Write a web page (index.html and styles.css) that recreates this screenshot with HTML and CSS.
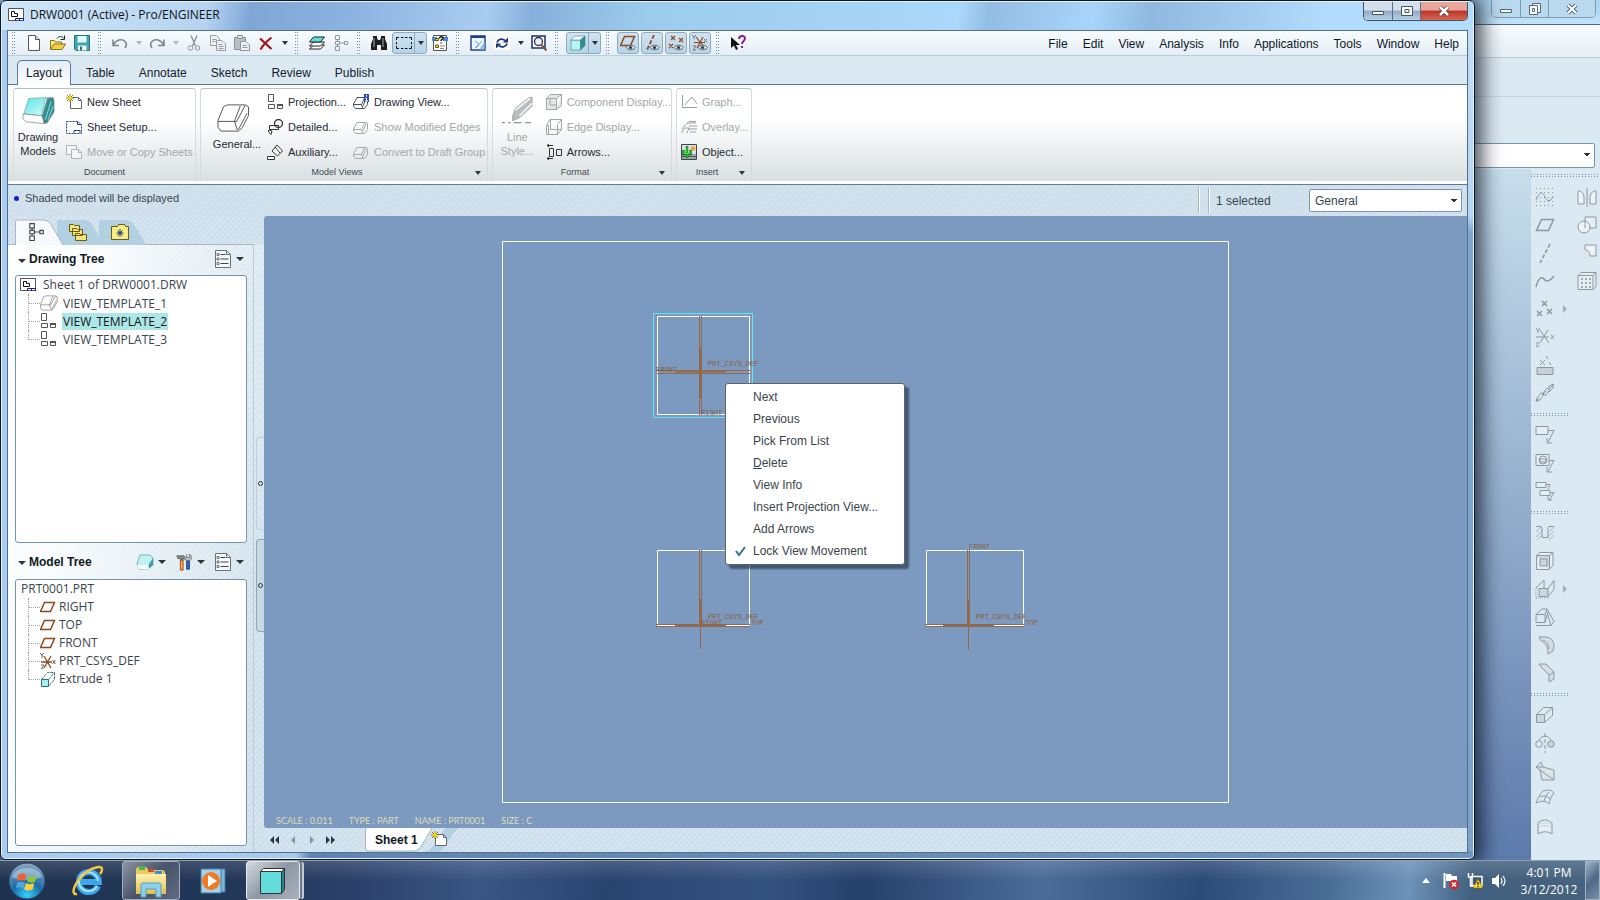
FILE: index.html
```html
<!DOCTYPE html>
<html lang="en">
<head>
<meta charset="utf-8">
<title>DRW0001 (Active) - Pro/ENGINEER</title>
<link rel="stylesheet" href="styles.css">
</head>
<body>
<svg class="defs" aria-hidden="true">
<defs>
<linearGradient id="gAqua" x1="0" y1="0" x2="1" y2="1"><stop offset="0" stop-color="#5fe3e3"/><stop offset="1" stop-color="#d8ffff"/></linearGradient>
<linearGradient id="gFold" x1="0" y1="0" x2="0" y2="1"><stop offset="0" stop-color="#fff3ad"/><stop offset="1" stop-color="#e3bd52"/></linearGradient>
<radialGradient id="gOrb" cx=".5" cy=".9" r=".9"><stop offset="0" stop-color="#35d0ff"/><stop offset=".45" stop-color="#1c6ca8"/><stop offset="1" stop-color="#8fa9c0"/></radialGradient>
<symbol id="drw" viewBox="0 0 16 16"><path d="M.5 1.500h15v12H.5z" fill="#fff" stroke="#555"/><path d="M3.500 4.500h3v2h3v3h-6z" fill="none" stroke="#111"/><path d="M7.500 14v-2.500h8V14M11.500 11.500V14" fill="none" stroke="#1a1a9a"/></symbol>
<symbol id="new" viewBox="0 0 16 16"><path d="M2.500.5h7l4 4v11h-11z" fill="#fff" stroke="#555"/><path d="M9.500.5v4h4" fill="#ddd" stroke="#555"/></symbol>
<symbol id="open" viewBox="0 0 16 16"><path d="M.5 14V5.500h4l1 1.500h6v2" fill="#fbe98a" stroke="#8a7414"/><path d="M.5 14.500 4 9h11.500L12 14.500z" fill="#f2cf45" stroke="#8a7414"/><path d="M7 3.500C9 .8 12 1 14 3.500M14.500.5v4h-4" fill="none" stroke="#222"/></symbol>
<symbol id="save" viewBox="0 0 16 16"><path d="M.5.5h15v15H2L.5 14z" fill="#3fa8b0" stroke="#2b6f79"/><path d="M3.500 1h9v6.500h-9z" fill="#dffcff"/><path d="M4 10.500h8.500v5H4z" fill="#eef6f7"/><path d="M6 11.500h2v4H6z" fill="#2b6f79"/></symbol>
<symbol id="undo" viewBox="0 0 16 16"><path d="M1 4.500v6h6M1.500 10C4 4.500 10 3.500 13 6.500c2 2 1.500 4.500 0 6.500" fill="none" stroke="#7b8791" stroke-width="1.600"/></symbol>
<symbol id="redo" viewBox="0 0 16 16"><path d="M15 4.500v6H9M14.500 10C12 4.500 6 3.500 3 6.500c-2 2-1.500 4.500 0 6.500" fill="none" stroke="#7b8791" stroke-width="1.600"/></symbol>
<symbol id="cut" viewBox="0 0 16 16" fill="none" stroke="#8d969d"><path d="M5 .5 9.500 11M11 .5 6.500 11" stroke-width="1.400"/><circle cx="4.500" cy="13" r="2.200"/><circle cx="11.500" cy="13" r="2.200"/></symbol>
<symbol id="copy" viewBox="0 0 16 16" fill="#eef1f3" stroke="#969ea4"><path d="M.5.5h6l3 3v7h-9z"/><path d="M2.500 4.500h4M2.500 6.500h3"/><path d="M6.500 5.500h5.500l3.500 3.500v6.500h-9z"/><path d="M8.500 9.500h4M8.500 11.500h5M8.500 13.500h5"/></symbol>
<symbol id="paste" viewBox="0 0 16 16" stroke="#8d969d"><path d="M.5 2.500h11v12H.5z" fill="#b9bfc4"/><path d="M3.500.5h5v3h-5z" fill="#dde1e4"/><path d="M6.500 6.500h5.500l3.500 3.500v5.500h-9z" fill="#eef1f3"/><path d="M8.500 10.500h4M8.500 12.500h5"/></symbol>
<symbol id="del" viewBox="0 0 16 16"><path d="M2 3.500 13.500 14M13.500 2.500C9 6 5 10 2.500 14.500" fill="none" stroke="#a3121b" stroke-width="2.200"/></symbol>
<symbol id="layers" viewBox="0 0 16 16" stroke="#222"><path d="m.5 14 4-4h11l-4 4z" fill="#fff"/><path d="m.5 11 4-4h11l-4 4z" fill="#fff"/><path d="m.5 7 4-5h11l-4 5z" fill="#5fe0e0"/></symbol>
<symbol id="tree" viewBox="0 0 16 16" fill="none" stroke="currentColor"><path d="M2.500.5h4v4h-4zM2.500 6.500h4v3h-4zM2.500 11.500h4v4h-4zM11.500 6.500h3v3h-3zM4.500 4.500v2M4.500 9.500v2M6.500 8h5"/></symbol>
<symbol id="bino" viewBox="0 0 16 16"><path d="M2 1h4v2l1 2h2l1-2V1h4v3l2 5v6h-6V10H6v5H0V9l2-5z" fill="#1c1c1c"/><path d="M3 3v9M12 3v9" stroke="#aaa"/></symbol>
<symbol id="marq" viewBox="0 0 16 16"><path d="M.5 5V2.500H3M5 2.500h2.500M9 2.500h2.500M13 2.500h2.500V5M15.500 7v2.500M15.500 11v2.500H13M11.500 13.500H9M7.500 13.500H5M3 13.500H.5V11M.5 9.500V7" fill="none" stroke="#111"/></symbol>
<symbol id="find" viewBox="0 0 16 16"><path d="M1.500.5h13v15h-13z" fill="#fff" stroke="#555"/><path d="M0 2h5v4H0zM11 2h5v4h-5z" fill="#4b87d8"/><path d="M3.500 3.500h3v2h-3zM3.500 10h3v2.500h-3z" fill="#f5e048" stroke="#6b5b00"/><path d="M7.500 3.500c0-2.500 4-2.500 3.500 0-.5 1-2 1-2 2.500M9 7.500v1" fill="none" stroke="#111" stroke-width="1.500"/><path d="M8 11h5M8 13.500h4" stroke="#888"/></symbol>
<symbol id="sketch" viewBox="0 0 16 16"><path d="M1 1h14v14H1z" fill="#eaf5ff" stroke="#1d3f80" stroke-width="1.400"/><path d="M1 2h14" stroke="#1d3f80" stroke-width="2"/><path d="m5 6 4 3-4 4M12 6l-6 7" fill="none" stroke="#6ba6dc"/><path d="M9 14.500h5.500V7z" fill="#8ec0ef"/></symbol>
<symbol id="refresh" viewBox="0 0 16 16"><path d="M0 1h16v14H0z" fill="#fbfbef"/><path d="M3 7.500C4 4 8 3 11 5.500M13 8.500C12 12 8 13 5 10.500" fill="none" stroke="#16357f" stroke-width="1.700"/><path d="M9 7.500h5v-5zM7 8.500H2v5z" fill="#16357f"/></symbol>
<symbol id="zoom" viewBox="0 0 16 16"><path d="M1 1h13v12H1z" fill="#fff" stroke="#1d2f70" stroke-width="1.500"/><circle cx="7.500" cy="6.500" r="4" fill="#eef" stroke="#333" stroke-width="1.300"/><path d="m10.500 10 5 5.500" stroke="#8b4a32" stroke-width="2"/></symbol>
<symbol id="cube" viewBox="0 0 16 16" stroke="#3d8585" stroke-width=".6"><path d="M1 5h9.500v10H1z" fill="#b5f5f5"/><path d="m1 5 4-4h10l-4.500 4z" fill="#f2ffff"/><path d="M10.500 5 15 1v9.500L10.500 15z" fill="#2f8f8f"/></symbol>
<symbol id="eye" viewBox="0 0 16 16"><path d="M6 12.500c2-3 7-3 9.500 0-2.500 3-7.500 3-9.500 0z" fill="#dfe5e8" stroke="#59636a"/><circle cx="10.500" cy="12.500" r="1.600" fill="#303a40"/></symbol>
<symbol id="plane" viewBox="0 0 16 16"><path d="M4.500 3.500h10l-4 9h-10z" fill="none" stroke="#8c4a1c" stroke-width="1.500"/></symbol>
<symbol id="pvis" viewBox="0 0 16 16"><use href="#plane" y="-2"/><use href="#eye"/></symbol>
<symbol id="avis" viewBox="0 0 16 16"><path d="M10 0 3 15" stroke="#8c4a1c" stroke-width="1.800" stroke-dasharray="4 2"/><use href="#eye"/></symbol>
<symbol id="ptvis" viewBox="0 0 16 16"><path d="m3 1 4 4m0-4L3 5m8-2 4 4m0-4-4 4M1 9l4 4m0-4-4 4" stroke="#8c4a1c" stroke-width="1.300"/><use href="#eye"/></symbol>
<symbol id="cvis" viewBox="0 0 16 16"><path d="M2 7.500h11M4 2l8 10M11 2 5 13" stroke="#8c4a1c" stroke-width="1.200"/><path d="m0 0 2 2 2-2M2 2v2M12 4l3 3m0-3-3 3M1 11h3l-3 4h3" fill="none" stroke="#777"/><use href="#eye"/></symbol>
<symbol id="help" viewBox="0 0 16 16"><path d="M1 2v11l3-2.500L6 15l2-1-2-4h4z" fill="#111"/><path d="M9 4c0-4 6-4 6-.5C15 6 12 6 12 9M12 11v2" fill="none" stroke="#8a1fa0" stroke-width="2"/></symbol>
<symbol id="boxA" viewBox="0 0 34 30"><path d="m7 2 23-1-6 2-4 17-18-2z" fill="url(#gAqua)" stroke="#5aa5a5" stroke-width=".7"/><path d="m1 18 20 2 2 8L4 26l-3-3z" fill="#fff" stroke="#777" stroke-width=".7"/><path d="m21 20 5-17 6-2 1 4v11l-7 11-3 1z" fill="#2f8f92" stroke="#777" stroke-width=".7"/><path d="m24 24 6-19M27 24l5-14" stroke="#8cdcdc"/></symbol>
<symbol id="box" viewBox="0 0 34 30" fill="none" stroke="currentColor"><path d="M11 1.500h18l3.500 2v9L26 25l-4 3.500H4l-3-4v-7L7 3zM1 18.500h17l6-16M18 18.500l3 9M18 18.500l2 .5 9-17M22 27l9-17"/></symbol>
<symbol id="sheetnew" viewBox="0 0 16 16"><path d="M4.500 3.500h8l3 3v8h-11z" fill="#fff" stroke="#667"/><path d="M12.500 3.500v3h3" fill="none" stroke="#667"/><path d="M4 0v8M0 4h8M1 1l6 6M7 1 1 7" stroke="#6d5c00" stroke-width=".8"/><path d="M4 1.500v5M1.500 4h5" stroke="#ffe600" stroke-width="1.500"/></symbol>
<symbol id="setup" viewBox="0 0 16 16"><path d="M.5 2.500h11l4 3v9H.5z" fill="#fff" stroke="#23407c" stroke-dasharray="2 1"/><path d="M11.500 2.500v3h4M8 14v-2.500h6V14" fill="none" stroke="#23407c"/></symbol>
<symbol id="move" viewBox="0 0 16 16" fill="#f5f6f6" stroke="#b0b5b8"><path d="M.5 1.500h10v9H.5z"/><path d="M5.500 5.500h7l3 3v6h-10zM12.500 5.500v3h3"/></symbol>
<symbol id="proj" viewBox="0 0 16 16" fill="#fff" stroke="#555"><path d="M1.500.5h5v7h-5zM1.500 10.500h6v4h-6zM10.500 10.500h5v4h-5z"/><path d="M10 11h6" stroke-width="2"/></symbol>
<symbol id="detail" viewBox="0 0 16 16" fill="none" stroke="#333"><circle cx="11.500" cy="4.500" r="4" stroke-width="1.300"/><path d="M11 6.500H2.500v4h9V6M1 12l3 3.500 1-3.500-3-1z"/></symbol>
<symbol id="aux" viewBox="0 0 16 16" fill="#fff" stroke="#333"><path d="m5 7 5-6 5.500 6-5 5zM8 3l5 6"/><path d="M.5 12.500h7v3h-7z"/></symbol>
<symbol id="dv" viewBox="0 0 16 16" fill="none" stroke="currentColor"><path d="M4 3.500h9l1.500 1v6l-3 4h-9L.5 12v-2zM.5 10.500h8l3-6.500M8.500 10.500l1.500 4M10 12l3-7"/></symbol>
<symbol id="dvi" viewBox="0 0 16 16"><use href="#dv"/><path d="M11 0h5v8h-5z" fill="#2450b0"/><path d="M13.500 1v1.500M12.500 4h1v3M12 7h3" stroke="#fff" fill="none"/></symbol>
<symbol id="pencil" viewBox="0 0 34 30"><path d="m12 20 3-8L29 1h3v9L19 22l-7 3z" fill="#b9bdbf" stroke="#8d9295" stroke-width=".7"/><path d="m15 14 15-12M19 20 32 7" stroke="#eee" stroke-width="2"/><path d="M1 27h3m3 0h3m3 0h8m4 0h6" stroke="#8d9295" stroke-width="1.300"/></symbol>
<symbol id="comp" viewBox="0 0 16 16" stroke="#a0a5a8"><path d="M.5 4.500h10v11H.5zM.5 4.500l4-4h11l-5 4M15.500.5v11l-5 4" fill="#e4e7e8"/><path d="M4 4v7h7" fill="none"/></symbol>
<symbol id="edge" viewBox="0 0 16 16" stroke="#a0a5a8" fill="none"><path d="M.5 6.500 4 .5h11.500v10l-4 5H.5zM.5 6.500h2v9M4.500 .5v10h11M11.500 15.500v-10l4-5"/></symbol>
<symbol id="arrows" viewBox="0 0 16 16" stroke="#333" fill="none"><path d="M3.500 4.500h4v8h-4zM10.500 5.500h5v6h-5zM1 1.500h6M1 14.500h6M3 0 1 1.500 3 3M3 13l-2 1.500L3 16"/></symbol>
<symbol id="graph" viewBox="0 0 16 16" stroke="#9a9fa3" fill="none"><path d="M1.500 1v12.500H16M4 11l4-5 3-3 5 7"/></symbol>
<symbol id="over" viewBox="0 0 16 16" stroke="#9a9fa3" fill="none"><path d="m.5 14 3-5h5l-3 5M4 6.500l4-4h7M6 4h9M8 7h8M7 10h9M9 13h6M1 10l3-4"/></symbol>
<symbol id="obj" viewBox="0 0 16 16"><path d="M.5.5h15v15H.5z" fill="#d5e2ee" stroke="#444"/><path d="M1 10h14v5H1z" fill="#9aa"/><path d="M1 12.500h14" stroke="#555"/><circle cx="12" cy="4.500" r="2.300" fill="#f6a32b"/><path d="M6 2v12M2.500 6v4h7V6" stroke="#11771a" stroke-width="2.400" fill="none"/><path d="M6 3v10M3 7v2.500h6V7" stroke="#43e04b" fill="none"/></symbol>
<symbol id="folders" viewBox="0 0 18 18" fill="#f6e67a" stroke="#6b5b17"><path d="M.5 1.500h4l1 1h5v6H.5zM3.500 5.500h4l1 1h5v6h-10zM6.500 10.500h4l1 1h6v6h-11z"/></symbol>
<symbol id="fav" viewBox="0 0 18 16"><path d="M.5 2.500h6l1-2h6l1 2h3v13H.5z" fill="#f8ec83" stroke="#6b5b17"/><path d="M9 5v8M5.500 9h7M6.500 6.500l5 5M11.500 6.500l-5 5" stroke="#16357f"/></symbol>
<symbol id="list" viewBox="0 0 16 18"><path d="M.5.500h11l4 4v13H.5z" fill="#f5f9fc" stroke="#63737f"/><path d="M11.500.5v4h4" fill="none" stroke="#63737f"/><path d="M5.500 4.500h5M5.500 9h8M5.500 13.500h8" stroke="#444"/><path d="M2 3.500h2v2H2zM2 8h2v2H2zM2 12.500h2v2H2z" fill="none" stroke="#555" stroke-width=".8"/></symbol>
<symbol id="shade" viewBox="0 0 18 16"><path d="M4 1h10l3 3v7l-5 4H3l-2-5z" fill="#bff3f3" stroke="#5c9a9c" stroke-width=".7"/><path d="m13 10 4-6v7l-5 4z" fill="#3f9fa2"/><path d="M1 11h11l1 4H3z" fill="#fff"/></symbol>
<symbol id="tools" viewBox="0 0 18 20"><path d="M1 3h8l3 3v3l-3-3H8v2H5V6H2z" fill="#7f8b93" stroke="#444" stroke-width=".7"/><path d="M5 8h3v11H5z" fill="#f6b83c" stroke="#a33a10"/><path d="M12 1v4h3V1l2 2v4l-2 2h-3l-2-3" fill="#b9c1c6" stroke="#555" stroke-width=".7"/><path d="M12 9h3v9h-3z" fill="#2f6fd0" stroke="#173a78"/></symbol>
<symbol id="csys" viewBox="0 0 16 16"><path d="M1 9h11M4 3l7 12M11 3 4 15" stroke="#8c4a1c" stroke-width="1.300"/><path d="m0 0 2 2 2-2M2 2v3M12.500 7l3 4m0-4-3 4M1 12h3l-3 4h3" fill="none" stroke="#666"/></symbol>
<symbol id="ext" viewBox="0 0 16 16"><path d="M1.500 8.500h7v7h-7z" fill="#9ff0f0" stroke="#3b6f70"/><path d="m1.500 8.500 6-7h7M14.500 1.500v7l-6 7M8.500 8.500l6-7" fill="none" stroke="#3b6f70" stroke-dasharray="3 1"/></symbol>
<symbol id="s1" viewBox="0 0 20 20"><path d="M1 1.500h18M1 5.500h18M1 10.500h18M1 14.500h18M1 18.500h18" stroke-dasharray="1 3"/><path d="M1 13c4-10 7-8 9-3s6 5 8-1"/></symbol>
<symbol id="s2" viewBox="0 0 20 20"><path d="M6.500 4.500h12l-5 11H1.500z" stroke-width="1.500"/></symbol>
<symbol id="s3" viewBox="0 0 20 20"><path d="M15 1 5 20" stroke-width="1.600" stroke-dasharray="4 2"/></symbol>
<symbol id="s4" viewBox="0 0 20 20"><path d="M1 16C3 7 7 5 9 8s5 3 10-3" stroke-width="1.500"/></symbol>
<symbol id="s5" viewBox="0 0 20 20"><path d="m7 2 5 5m0-5L7 7m-5 5 5 5m0-5-5 5m10-7 5 5m0-5-5 5" stroke-width="1.500"/></symbol>
<symbol id="s6" viewBox="0 0 20 20"><path d="M1 10h13M5 3l9 13M13 3 5 16m11-8 3 4m0-4-3 4M1 1l2 3 2-3M3 4v2M1 16h3l-3 4h4"/></symbol>
<symbol id="s7" viewBox="0 0 20 20"><path d="M2 12.500h16v7H2z" fill="#c6d0d6"/><path d="m5 5 5 5m0-5-5 5M11 1l2 3m1 3 2 3"/></symbol>
<symbol id="s8" viewBox="0 0 20 20"><path d="m2 15 4-5 3 1-4 6-4 1zM8 10l4-5 3 1-4 6-3 0zM13 4l5-3v4l-4 4M1 19l3-4M7 12l4-4M14 6l5-5"/></symbol>
<symbol id="s9" viewBox="0 0 20 20"><path d="M1 1.500h12v8H1z" fill="#e6eef4"/><path d="M13 5.500h6l-6 12M12 13v5h5"/></symbol>
<symbol id="s10" viewBox="0 0 20 20"><path d="M1 1.500h13v11H1z" fill="#e6eef4"/><circle cx="8" cy="7" r="4"/><path d="M5 9h6V6H5z"/><path d="M14 7.500h5l-6 11M12 14v5h5"/></symbol>
<symbol id="s11" viewBox="0 0 20 20"><path d="M1 1.500h10v5H1zM5 9.500h10v5H5z" fill="#e6eef4"/><path d="M11 3.500h4l-2 5M15 11.500h4l-5 8M13 15v4h4"/></symbol>
<symbol id="s12" viewBox="0 0 20 20"><path d="M1 3.500h5l1 2v9h6v-9l1-2h5"/><path d="M1 9l5-5M1 14l6-6M2 17l5-5M14 9l5-5M13 14l6-6M14 17l5-5" stroke-width=".6"/></symbol>
<symbol id="s13" viewBox="0 0 20 20"><path d="M1.500 4.500 5 1.500h13v13l-4 4H1.500z" fill="#e6eef4"/><path d="M1.500 4.500h13v14M14.500 4.500l3.500-3M5 8h7v7H5z" fill="#ccd6dc"/></symbol>
<symbol id="s14" viewBox="0 0 20 20"><path d="M4 9.500h9v8H4z" fill="#ccd6dc"/><path d="M1 9v10h13" stroke-dasharray="1 1"/><path d="m1 9 8-8v8M13 9.500l6-8v9l-6 7"/></symbol>
<symbol id="s15" viewBox="0 0 20 20"><path d="M1 7.500h9v8H1zM1 18.500h15l3-4L12 2H7L1 7.500M10 7.500 12 2M10 15.500 13 5M16 18.500 12 5"/></symbol>
<symbol id="s16" viewBox="0 0 20 20"><path d="M4 2h6c6 0 9 4 9 9l-1 5-5 3c0-8-2-11-7-13z" fill="#d5dde2"/><path d="M14 14c0-4-2-7-6-9"/></symbol>
<symbol id="s17" viewBox="0 0 20 20"><path d="M4 1h7l8 8v7l-5 3v-7L7 5z" fill="#d5dde2"/><path d="m14 12 5-3"/></symbol>
<symbol id="s18" viewBox="0 0 20 20"><path d="M1.500 9.500h8v8h-8z" fill="#ccd6dc"/><path d="m1.500 9.500 7-7h9v8l-8 7M9.500 9.500l8-7"/></symbol>
<symbol id="s19" viewBox="0 0 20 20"><circle cx="4" cy="11" r="3.300"/><circle cx="16" cy="11" r="3.300" fill="#ccd6dc"/><path d="M10 0v20" stroke-dasharray="4 2"/><path d="M4 7c3-5 9-5 12 0"/></symbol>
<symbol id="s20" viewBox="0 0 20 20"><path d="m1 6 5-5 2 5 11 3v10H7L5 9z" fill="#dbe3e8"/><path d="m5 9 14 10M1 6h7"/></symbol>
<symbol id="s21" viewBox="0 0 20 20"><path d="M1 14C4 6 7 2 9 2c5-2 7-1 10 2-2 2-4 6-5 11-4-4-8-3-13-1zM5 8c4-2 7-1 10 2M14 3c-3 3-4 6-5 9"/></symbol>
<symbol id="s22" viewBox="0 0 20 20"><path d="M3 6c4-4 10-4 14 0v11c-4-3-10-3-14 0z" fill="#e6eef4"/><path d="M3 8c4-3 10-3 14 0M3 11c4-3 10-3 14 0" stroke-dasharray="1 2"/></symbol>
<symbol id="m1" viewBox="0 0 20 20"><path d="M10 1v19"/><path d="M1 4c4 0 6 3 6 7v6H1zM19 4c-4 0-6 3-6 7v6h6z" fill="#eef3f7"/></symbol>
<symbol id="m2" viewBox="0 0 20 20"><path d="M8 2h11v11H8z" fill="#e6eef4"/><circle cx="7" cy="12" r="6" fill="#eef3f7"/><path d="M8 13V6"/></symbol>
<symbol id="m3" viewBox="0 0 20 20"><path d="M8 2h11v11h-6c0-4-2-6-5-6z" fill="#eef3f7"/><circle cx="7" cy="12" r="5" fill="#dfe4ea" stroke="none"/></symbol>
<symbol id="m4" viewBox="0 0 20 20"><path d="M1 4.500 4 1.500h15v14l-3 3H1zM1 4.500h15v14M16 4.500l3-3" fill="#e6eef4"/><path d="M4 8h10M4 12h10M4 16h10" stroke-width="1.500" stroke-dasharray="2 2"/></symbol>
</defs>
</svg>

<div class="desktop">
  <section class="back-window" aria-label="Pro/ENGINEER background window">
    <div class="back-title">
      <div class="win-buttons pale">
        <button type="button" aria-label="Minimize"><svg width="14" height="12"><path d="M1.500 6.500h11v3h-11z" fill="#fff" stroke="#55677c"/></svg></button>
        <button type="button" aria-label="Restore"><svg width="14" height="14"><path d="M4.500 1.500h8v9h-8z" fill="#fff" stroke="#55677c"/><path d="M1.500 3.500h8v9h-8zM4.500 6.500h2v3h-2z" fill="#fff" stroke="#55677c"/></svg></button>
        <button type="button" class="wide" aria-label="Close"><svg width="14" height="12"><path d="m3 2 8 8m0-8-8 8" stroke="#55677c" stroke-width="4"/><path d="m3 2 8 8m0-8-8 8" stroke="#fff" stroke-width="2"/></svg></button>
      </div>
    </div>
    <div class="back-toolbar"></div>
    <div class="back-tabs"></div>
    <div class="back-ribbon"><select class="combo back-combo" aria-label="Filter"><option></option></select></div>
    <div class="back-body">
      <div class="back-canvas"></div>
      <div class="feature-bar">
        <div class="hgrip long"></div>
        <div class="feature-cols">
          <div class="feature-col">
            <button type="button" aria-label="Sketch"><svg><use href="#s1"/></svg></button>
            <button type="button" aria-label="Plane"><svg><use href="#s2"/></svg></button>
            <button type="button" aria-label="Axis"><svg><use href="#s3"/></svg></button>
            <button type="button" aria-label="Curve"><svg><use href="#s4"/></svg></button>
            <button type="button" class="more" aria-label="Point"><svg><use href="#s5"/></svg></button>
            <button type="button" aria-label="Coordinate system"><svg><use href="#s6"/></svg></button>
            <button type="button" aria-label="Analysis"><svg><use href="#s7"/></svg></button>
            <button type="button" aria-label="Reference"><svg><use href="#s8"/></svg></button>
            <div class="hgrip"></div>
            <button type="button" aria-label="Annotation"><svg><use href="#s9"/></svg></button>
            <button type="button" aria-label="Annotation plane"><svg><use href="#s10"/></svg></button>
            <button type="button" aria-label="Propagate"><svg><use href="#s11"/></svg></button>
            <div class="hgrip"></div>
            <button type="button" aria-label="Hole"><svg><use href="#s12"/></svg></button>
            <button type="button" aria-label="Shell"><svg><use href="#s13"/></svg></button>
            <button type="button" class="more" aria-label="Rib"><svg><use href="#s14"/></svg></button>
            <button type="button" aria-label="Draft"><svg><use href="#s15"/></svg></button>
            <button type="button" aria-label="Round"><svg><use href="#s16"/></svg></button>
            <button type="button" aria-label="Chamfer"><svg><use href="#s17"/></svg></button>
            <div class="hgrip"></div>
            <button type="button" aria-label="Extrude"><svg><use href="#s18"/></svg></button>
            <button type="button" aria-label="Revolve"><svg><use href="#s19"/></svg></button>
            <button type="button" aria-label="Sweep"><svg><use href="#s20"/></svg></button>
            <button type="button" aria-label="Boundary blend"><svg><use href="#s21"/></svg></button>
            <button type="button" aria-label="Style"><svg><use href="#s22"/></svg></button>
          </div>
          <div class="feature-col second">
            <button type="button" aria-label="Mirror"><svg><use href="#m1"/></svg></button>
            <button type="button" aria-label="Merge"><svg><use href="#m2"/></svg></button>
            <button type="button" aria-label="Trim"><svg><use href="#m3"/></svg></button>
            <button type="button" aria-label="Pattern"><svg><use href="#m4"/></svg></button>
          </div>
        </div>
      </div>
    </div>
  </section>

  <main class="window">
    <header class="titlebar">
      <svg class="i16"><use href="#drw"/></svg>
      <h1>DRW0001 (Active) - Pro/ENGINEER</h1>
      <div class="win-buttons">
        <button type="button" aria-label="Minimize"><svg width="14" height="12"><path d="M1.500 6.500h11v3h-11z" fill="#fff" stroke="#455467"/></svg></button>
        <button type="button" aria-label="Maximize"><svg width="14" height="12"><path d="M1.500 1.500h11v9h-11zM5 4.500h4v3H5z" fill="#fff" stroke="#455467"/></svg></button>
        <button type="button" class="wide close" aria-label="Close"><svg width="14" height="12"><path d="m3 2 8 8m0-8-8 8" stroke="#5c3535" stroke-width="4"/><path d="m3 2 8 8m0-8-8 8" stroke="#fff" stroke-width="2.500"/></svg></button>
      </div>
    </header>
    <div class="client">
      <div class="toolbar">
        <span class="grip"></span>
        <button type="button" class="tb" aria-label="New"><svg class="i16"><use href="#new"/></svg></button>
        <button type="button" class="tb" aria-label="Open"><svg class="i16"><use href="#open"/></svg></button>
        <button type="button" class="tb" aria-label="Save"><svg class="i16"><use href="#save"/></svg></button>
        <span class="grip"></span>
        <button type="button" class="tb" aria-label="Undo"><svg class="i16"><use href="#undo"/></svg></button>
        <button type="button" class="drop dim" aria-label="Undo list"></button>
        <button type="button" class="tb" aria-label="Redo"><svg class="i16"><use href="#redo"/></svg></button>
        <button type="button" class="drop dim" aria-label="Redo list"></button>
        <button type="button" class="tb" aria-label="Cut"><svg class="i16"><use href="#cut"/></svg></button>
        <button type="button" class="tb" aria-label="Copy"><svg class="i16"><use href="#copy"/></svg></button>
        <button type="button" class="tb" aria-label="Paste"><svg class="i16"><use href="#paste"/></svg></button>
        <button type="button" class="tb" aria-label="Delete"><svg class="i16"><use href="#del"/></svg></button>
        <button type="button" class="drop" aria-label="Delete options"></button>
        <span class="grip"></span>
        <button type="button" class="tb" aria-label="Layers"><svg class="i16"><use href="#layers"/></svg></button>
        <button type="button" class="tb grey" aria-label="Tree"><svg class="i16"><use href="#tree"/></svg></button>
        <span class="grip"></span>
        <button type="button" class="tb" aria-label="Find"><svg class="i16"><use href="#bino"/></svg></button>
        <div class="split"><button type="button" class="tb" aria-label="Select box"><svg class="i16"><use href="#marq"/></svg></button><button type="button" class="drop" aria-label="Selection options"></button></div>
        <button type="button" class="tb" aria-label="Selection list"><svg class="i16"><use href="#find"/></svg></button>
        <span class="grip"></span>
        <button type="button" class="tb" aria-label="Repaint"><svg class="i16"><use href="#sketch"/></svg></button>
        <button type="button" class="tb" aria-label="Update"><svg class="i16"><use href="#refresh"/></svg></button>
        <button type="button" class="drop" aria-label="Update options"></button>
        <button type="button" class="tb" aria-label="Zoom"><svg class="i16"><use href="#zoom"/></svg></button>
        <span class="grip"></span>
        <div class="split"><button type="button" class="tb" aria-label="Shading"><svg class="i16"><use href="#cube"/></svg></button><button type="button" class="drop" aria-label="Display style"></button></div>
        <span class="grip"></span>
        <button type="button" class="tb on" aria-label="Planes"><svg class="i16"><use href="#pvis"/></svg></button>
        <button type="button" class="tb on" aria-label="Axes"><svg class="i16"><use href="#avis"/></svg></button>
        <button type="button" class="tb on" aria-label="Points"><svg class="i16"><use href="#ptvis"/></svg></button>
        <button type="button" class="tb on" aria-label="Coordinate systems"><svg class="i16"><use href="#cvis"/></svg></button>
        <span class="grip"></span>
        <button type="button" class="tb" aria-label="Context help"><svg class="i16"><use href="#help"/></svg></button>
        <nav class="menubar">
          <button type="button">File</button><button type="button">Edit</button><button type="button">View</button><button type="button">Analysis</button><button type="button">Info</button><button type="button">Applications</button><button type="button">Tools</button><button type="button">Window</button><button type="button">Help</button>
        </nav>
      </div>

      <nav class="tabs">
        <button type="button" class="active">Layout</button><button type="button">Table</button><button type="button">Annotate</button><button type="button">Sketch</button><button type="button">Review</button><button type="button">Publish</button>
      </nav>

      <div class="ribbon">
        <section class="group g1">
          <div class="tools">
            <button type="button" class="large"><svg><use href="#boxA"/></svg><span>Drawing<br>Models</span></button>
            <div class="stack">
              <button type="button"><svg class="i16"><use href="#sheetnew"/></svg>New Sheet</button>
              <button type="button"><svg class="i16"><use href="#setup"/></svg>Sheet Setup...</button>
              <button type="button" disabled><svg class="i16"><use href="#move"/></svg>Move or Copy Sheets</button>
            </div>
          </div>
          <h2>Document</h2>
        </section>
        <section class="group g2">
          <div class="tools">
            <button type="button" class="large"><svg><use href="#box"/></svg><span>General...</span></button>
            <div class="stack">
              <button type="button"><svg class="i16"><use href="#proj"/></svg>Projection...</button>
              <button type="button"><svg class="i16"><use href="#detail"/></svg>Detailed...</button>
              <button type="button"><svg class="i16"><use href="#aux"/></svg>Auxiliary...</button>
            </div>
            <div class="stack">
              <button type="button"><svg class="i16"><use href="#dvi"/></svg>Drawing View...</button>
              <button type="button" disabled><svg class="i16"><use href="#dv"/></svg>Show Modified Edges</button>
              <button type="button" disabled><svg class="i16"><use href="#dv"/></svg>Convert to Draft Group</button>
            </div>
          </div>
          <h2>Model Views</h2><button type="button" class="drop expand" aria-label="More model views"></button>
        </section>
        <section class="group g3">
          <div class="tools">
            <button type="button" class="large" disabled><svg><use href="#pencil"/></svg><span>Line<br>Style...</span></button>
            <div class="stack">
              <button type="button" disabled><svg class="i16"><use href="#comp"/></svg>Component Display...</button>
              <button type="button" disabled><svg class="i16"><use href="#edge"/></svg>Edge Display...</button>
              <button type="button"><svg class="i16"><use href="#arrows"/></svg>Arrows...</button>
            </div>
          </div>
          <h2>Format</h2><button type="button" class="drop expand" aria-label="More format"></button>
        </section>
        <section class="group g4">
          <div class="tools">
            <div class="stack">
              <button type="button" disabled><svg class="i16"><use href="#graph"/></svg>Graph...</button>
              <button type="button" disabled><svg class="i16"><use href="#over"/></svg>Overlay...</button>
              <button type="button"><svg class="i16"><use href="#obj"/></svg>Object...</button>
            </div>
          </div>
          <h2>Insert</h2><button type="button" class="drop expand" aria-label="More insert"></button>
        </section>
      </div>

      <div class="message">
        <span class="dot"></span><p>Shaded model will be displayed</p>
        <span class="bar"></span><span class="bar"></span>
        <label for="filter">1 selected</label>
        <select id="filter" class="combo"><option>General</option></select>
      </div>

      <div class="work">
        <aside class="side">
          <div class="side-tabs">
            <svg class="side-shape" viewBox="0 0 132 26" width="132" height="26">
              <path d="M84 26V3q0-2 2-2h25q6 0 9 6l11 19z" fill="#b3cfe2"/>
              <path d="M42 26V3q0-2 2-2h25q6 0 9 6l11 19z" fill="#b3cfe2"/>
              <path d="M.5 26V3q0-2 2-2H28q6 0 9 6l11 19" fill="#f7fafc" stroke="#a8b8c2"/>
            </svg>
            <button type="button" aria-label="Tree"><svg class="i18"><use href="#tree"/></svg></button>
            <button type="button" aria-label="Folders"><svg class="i18"><use href="#folders"/></svg></button>
            <button type="button" aria-label="Favorites"><svg class="i18"><use href="#fav"/></svg></button>
          </div>
          <div class="side-row">
            <div class="panels">
              <div class="phead"><button type="button" class="drop big" aria-label="Collapse"></button><h2>Drawing Tree</h2>
                <button type="button" class="pick" aria-label="Settings"><svg class="i18"><use href="#list"/></svg><i></i></button></div>
              <div class="treebox">
                <p class="root"><svg class="i16"><use href="#drw"/></svg>Sheet 1 of DRW0001.DRW</p>
                <ul>
                  <li><svg class="i18"><use href="#box"/></svg><span>VIEW_TEMPLATE_1</span></li>
                  <li class="sub"><svg class="i16"><use href="#proj"/></svg><span class="sel">VIEW_TEMPLATE_2</span></li>
                  <li class="sub"><svg class="i16"><use href="#proj"/></svg><span>VIEW_TEMPLATE_3</span></li>
                </ul>
              </div>
              <div class="phead"><button type="button" class="drop big" aria-label="Collapse"></button><h2>Model Tree</h2>
                <button type="button" class="pick" aria-label="Show"><svg class="i18"><use href="#shade"/></svg><i></i></button>
                <button type="button" class="pick" aria-label="Tools"><svg class="i18"><use href="#tools"/></svg><i></i></button>
                <button type="button" class="pick" aria-label="Settings"><svg class="i18"><use href="#list"/></svg><i></i></button></div>
              <div class="treebox model">
                <p class="root">PRT0001.PRT</p>
                <ul>
                  <li><svg class="i16"><use href="#plane"/></svg><span>RIGHT</span></li>
                  <li><svg class="i16"><use href="#plane"/></svg><span>TOP</span></li>
                  <li><svg class="i16"><use href="#plane"/></svg><span>FRONT</span></li>
                  <li><svg class="i16"><use href="#csys"/></svg><span>PRT_CSYS_DEF</span></li>
                  <li><svg class="i16"><use href="#ext"/></svg><span>Extrude 1</span></li>
                </ul>
              </div>
            </div>
            <div class="sash"><span></span><span class="firm"></span></div>
          </div>
        </aside>

        <div class="stage">
          <div class="canvas">
            <svg class="drawing" viewBox="264 216 1203 612">
              <g fill="none" stroke="#fff">
                <path d="M502.500 241.500h726v561h-726z"/>
                <path d="M657.500 316.500h92v98h-92zM657.500 550.500h92v75h-92zM926.500 550.500h97v75h-97z"/>
                <path d="M653.500 313.500h99v104h-99z" stroke="#5fe6f2"/>
              </g>
              <g fill="none" stroke="#94694a">
                <path d="M699.500 316v99M701.500 316v99M657 370.500h93M657 373.500h93"/>
                <path d="M699.500 550v75M701.500 550v75M700.500 625v24M656 624.500h94M656 626.500h94"/>
                <path d="M967.500 550v75M969.500 550v75M968.500 625v25M925 624.500h99M925 626.500h99"/>
                <path d="M700.500 347v51M676 371.500h50M700.500 599v26M675 625.500h51M968.500 600v25M943 625.500h51" stroke-width="2"/>
              </g>
              <g class="datum">
                <text x="708" y="366">PRT_CSYS_DEF</text><text x="656" y="372">FRONT</text><text x="701" y="415">RIGHT</text>
                <text x="708" y="619">PRT_CSYS_DEF</text><text x="701" y="625">RIGHT</text><text x="751" y="625">TOP</text>
                <text x="969" y="549">FRONT</text><text x="976" y="619">PRT_CSYS_DEF</text><text x="1025" y="625">TOP</text>
              </g>
            </svg>
            <div class="info"><span>SCALE : 0.011</span><span>TYPE : PART</span><span>NAME : PRT0001</span><span>SIZE : C</span></div>
            <menu class="context">
              <li><button type="button">Next</button></li>
              <li><button type="button">Previous</button></li>
              <li><button type="button">Pick From List</button></li>
              <li><button type="button"><u>D</u>elete</button></li>
              <li><button type="button">View Info</button></li>
              <li><button type="button">Insert Projection View...</button></li>
              <li><button type="button">Add Arrows</button></li>
              <li><button type="button"><svg width="12" height="12"><path d="m1 6 3 4 6-8" fill="none" stroke="#3a7396" stroke-width="2"/></svg>Lock View Movement</button></li>
            </menu>
          </div>
          <div class="sheets">
            <button type="button" aria-label="First sheet"><svg width="10" height="8"><path d="M5 0v8L1 4zM10 0v8L6 4z" fill="#263640"/></svg></button>
            <button type="button" aria-label="Previous sheet"><svg width="10" height="8"><path d="M7 0v8L3 4z" fill="#84939c"/></svg></button>
            <button type="button" aria-label="Next sheet"><svg width="10" height="8"><path d="M3 0v8l4-4z" fill="#84939c"/></svg></button>
            <button type="button" aria-label="Last sheet"><svg width="10" height="8"><path d="M0 0v8l4-4zM5 0v8l4-4z" fill="#263640"/></svg></button>
            <div class="sheet-tabs">
              <svg class="sheet-shape" viewBox="0 0 96 24" width="96" height="24"><path d="M60 24q6-2 10-9L80 0h14q-4 2-8 9l-6 9q-4 6-10 6z" fill="#b3cfe2"/><path d="M.5 0v20q0 3 3 3H48q6 0 9-6L67 0" fill="#fafcfd" stroke="#a8b4bc"/></svg>
              <button type="button" class="sheet">Sheet 1</button>
              <button type="button" class="add" aria-label="New sheet"><svg class="i16"><use href="#sheetnew"/></svg></button>
            </div>
          </div>
        </div>
      </div>
    </div>
  </main>

  <footer class="taskbar">
    <button type="button" class="task start" aria-label="Start"><svg width="38" height="38" viewBox="0 0 38 38"><circle cx="19" cy="19" r="18" fill="url(#gOrb)" stroke="#23405c"/><path d="M4 15C8 3 30 3 34 15c-8 3-20 5-30 0z" fill="#fff" opacity=".35"/><path d="M10 13c3-2 6-2 8 0l-1 6c-3-1-6-1-8 0z" fill="#f1612e"/><path d="M20 14c3 1 6 1 9-1l-2 7c-3 1-6 1-8-1z" fill="#8cc63f"/><path d="M9 21c3-2 5-1 8 0l-2 6c-2-2-5-2-7-1z" fill="#4aa7e8"/><path d="M18 21c3 2 6 1 8 0l-1 6c-3 2-6 2-9 0z" fill="#fbd038"/></svg></button>
    <button type="button" class="task ie" aria-label="Internet Explorer"><svg width="34" height="34" viewBox="0 0 34 34"><path d="M27 22a10 10 0 1 1 .8-4H9" fill="none" stroke="#3ba8ee" stroke-width="6"/><path d="M26 22a9.500 9.500 0 1 1 1-5" fill="none" stroke="#a8e4ff" stroke-width="2"/><path d="M6 30C-4 32 9 6 27 3c6-1 4 5 2 7" fill="none" stroke="#f6c73a" stroke-width="2.500"/></svg></button>
    <button type="button" class="task open" aria-label="Windows Explorer"><svg width="34" height="34" viewBox="0 0 34 34"><path d="M2 6q0-3 3-3h7l3 3h13q3 0 3 3v20H2z" fill="#e9c963"/><path d="M5 2h6v4H5z" fill="#4bb54b"/><path d="M14 5h6v3h-6z" fill="#d6492c"/><path d="M21 7h7v3h-7z" fill="#3b8ddb"/><path d="M2 10h30v20H2z" fill="url(#gFold)"/><path d="M7 33V21q0-2 2-2h16q2 0 2 2v12h-5v-8H12v8z" fill="#8fd0ec" stroke="#4f9fc4"/></svg></button>
    <button type="button" class="task wmp" aria-label="Media Player"><svg width="28" height="28" viewBox="0 0 28 28"><path d="M8 2h18v23H8z" fill="#7fb5d8" stroke="#3e7ca5"/><path d="M2 2h20v24H2z" fill="#a9d0ea" stroke="#3e7ca5"/><circle cx="12" cy="14" r="9" fill="#ef7a22"/><path d="m9 8 9 6-9 6z" fill="#fff"/></svg></button>
    <button type="button" class="task open active" aria-label="Pro/ENGINEER"><svg width="28" height="28" viewBox="0 0 28 28" stroke="#333"><path d="M1.500 4.500h21v22h-21z" fill="#62dcdc"/><path d="m1.500 4.500 3-3h21l-3 3z" fill="#fff"/><path d="m22.500 4.500 3-3v21l-3 4z" fill="#2a8586"/></svg></button>
    <div class="tray">
      <svg width="10" height="6"><path d="M1 5h8L5 0z" fill="#fff"/></svg>
      <svg width="16" height="18" viewBox="0 0 16 18"><path d="M1.500 1v15" stroke="#fff" stroke-width="2"/><path d="M3 2h5l1 2h5v7H9L8 9H3z" fill="#fff"/><circle cx="11" cy="12.500" r="4.800" fill="#d8262c"/><path d="m9 10.500 4 4m0-4-4 4" stroke="#fff" stroke-width="1.500"/></svg>
      <svg width="16" height="18" viewBox="0 0 16 18"><path d="M5 4.500h10v9H5z" fill="#3f5570" stroke="#fff" stroke-width="1.500"/><path d="M1.500 1v4h4V1M3.500 5v9h4" fill="none" stroke="#fff" stroke-width="1.500"/><path d="m11 7 5 9H6z" fill="#ffd52e" stroke="#8a6a00" stroke-width=".6"/><path d="M11 10v3M11 14v1" stroke="#222" stroke-width="1.300"/></svg>
      <svg width="16" height="18" viewBox="0 0 16 18"><path d="M1 6h3l4-4v14l-4-4H1z" fill="#fff"/><path d="M10 6q2 3 0 6M12 4q4 5 0 10" fill="none" stroke="#fff" stroke-width="1.200"/></svg>
      <time>4:01 PM<br>3/12/2012</time>
      <button type="button" class="peek" aria-label="Show desktop"></button>
    </div>
  </footer>
</div>
</body>
</html>
```

FILE: styles.css
```css
* { box-sizing: border-box; }
body, h1, h2, p, ul, menu { margin: 0; padding: 0; }
body { font: 12px "Liberation Sans", Arial, sans-serif; color: #1e2a36; }
button { font: inherit; color: inherit; background: none; border: 0; padding: 0; margin: 0; }
ul, menu { list-style: none; }
.defs { position: absolute; width: 0; height: 0; }
.i16 { width: 16px; height: 16px; flex: none; }
.i18 { width: 18px; height: 18px; flex: none; }

.desktop { position: relative; height: 100vh; min-height: 900px; overflow: hidden; display: flex; flex-direction: column; justify-content: flex-end; }

/* background window */
.back-window { position: absolute; inset: 0 0 40px 0; display: flex; flex-direction: column; background: #dbe9f2; }
.back-title { height: 25px; background: linear-gradient(#a9d2f0, #c2e2f7); border-bottom: 1px solid #4d6a84; display: flex; justify-content: flex-end; padding-right: 4px; flex: none; }
.back-title .win-buttons { height: 18px; }
.back-toolbar { height: 33px; background: linear-gradient(#f7fbfd, #e6eff5); border-bottom: 1px solid #bccfdb; flex: none; }
.back-tabs { height: 39px; border-bottom: 1px solid #c5d6e0; flex: none; }
.back-ribbon { height: 71px; padding: 0 5px 0 0; display: flex; justify-content: flex-end; align-items: flex-end; flex: none; }
.back-ribbon .back-combo { width: 220px; height: 25px; }
.back-body { flex: 1; display: flex; min-height: 0; }
.back-canvas { flex: 1; margin-top: 1px; background: linear-gradient(#c8deec, #5c7aab); }
.feature-bar { width: 69px; background: #dbe9f2; }
.hgrip { width: 40px; height: 14px; background: repeating-linear-gradient(90deg, #7792b0 0 1px, transparent 1px 3px) 0 6px / 39px 1px repeat-x, repeating-linear-gradient(90deg, #7792b0 0 1px, transparent 1px 3px) 0 8px / 39px 1px no-repeat; background-repeat: no-repeat; }
.hgrip.long { width: 69px; height: 15px; background-size: 69px 1px; }
.feature-cols { display: flex; }
.feature-col { width: 40px; }
.feature-col button { display: flex; align-items: center; gap: 8px; padding-left: 4px; width: 40px; height: 28px; }
.feature-col.second { width: 29px; overflow: hidden; }
.feature-col.second button { padding-left: 6px; }
.feature-col svg { width: 20px; height: 20px; flex: none; fill: none; stroke: #8b989f; }
.feature-col .more::after { content: ""; border: 4px solid transparent; border-left-color: #a3b0b8; border-right: 0; }

/* window buttons */
.win-buttons { display: flex; height: 20px; margin-left: auto; border: 1px solid #3f5468; border-top: 0; border-radius: 0 0 5px 5px; overflow: hidden; }
.win-buttons button { width: 28px; display: grid; place-items: center; background: linear-gradient(#d3e0ec 45%, #92a9c2 50%, #b8d0e4); }
.win-buttons button + button { border-left: 1px solid #5b7085; }
.win-buttons .wide { width: 47px; }
.win-buttons .close { background: linear-gradient(#e9a79b 45%, #b8352a 50%, #d8674f); }
.win-buttons.pale { border-color: #7d9cb8; }
.win-buttons.pale button { background: #b9d9ef; border-color: #7d9cb8; }

/* front window */
.window { position: absolute; inset: 0 125px 40px 0; display: flex; flex-direction: column; padding: 0 6px 6px; border: 1px solid #10161e; border-radius: 6px; box-shadow: 3px 0 20px 4px rgba(5, 15, 30, .75), inset 0 0 0 1px #e4f3ff; background: linear-gradient(90deg, #a9cbef 0, #a9cbef 20%, #5f86b0 21%, #7095bd 100%) bottom / 100% 8px no-repeat, linear-gradient(#c4dff5, #b6d5f2 25%, #7ea6cf 27%, #7fa4ca) right / 8px 100% no-repeat, #a9cbf0; }
.titlebar { display: flex; align-items: center; height: 28px; margin: 1px -5px 0; padding: 0 0 3px 6px; background: linear-gradient(100deg, #cfe6f8 0, #b6d4f0 14%, #7ea7d6 17%, #8cb4e0 24%, #a9cdf0 33%, #86b0da 36%, #9cccec 44%, #a3d2f2 55%, #a9d8fa 65%, #93bde4 67%, #a9d5fa 74%, #8fb9df 78%, #b1dcfb 90%); }
.titlebar h1 { font: 12px "Open Sans", "Noto Sans", sans-serif; margin-left: 6px; color: #0d1520; }
.titlebar .win-buttons { align-self: flex-start; margin-right: 5px; height: 19px; }
.client { flex: 1; min-height: 0; display: flex; flex-direction: column; border: 1px solid #4f6f8c; background: #dbe9f2; }

.toolbar { display: flex; align-items: center; height: 25px; background: linear-gradient(#f9fcfe, #e4eef5); border-bottom: 1px solid #b9cddb; flex: none; }
.grip { width: 10px; height: 23px; margin-right: 4px; flex: none; background: repeating-linear-gradient(#7792b0 0 1px, transparent 1px 3px) 4px 0 / 1px 23px, repeating-linear-gradient(#7792b0 0 1px, transparent 1px 3px) 6px 0 / 1px 23px; background-repeat: no-repeat; }
.tb { width: 24px; height: 22px; display: grid; place-items: center; flex: none; }
.tb.grey { color: #8d989f; }
.tb.on, .split { border: 1px solid #8faabd; border-radius: 3px; background: linear-gradient(#d3e3ef, #b5d4ea); }
.tb.on { width: 22px; margin: 0 1px; }
.split { display: flex; width: 35px; height: 22px; margin: 0 1px; }
.split .tb { width: 21px; height: 20px; }
.split .drop { width: 12px; height: 20px; border-left: 1px solid #8faabd; }
.drop { width: 13px; height: 20px; display: grid; place-items: center; flex: none; }
.drop::after, .pick i { content: ""; border: 3px solid transparent; border-top: 4px solid #2a3640; border-bottom: 0; }
.drop.dim::after { border-top-color: #b0b9c0; }
.menubar { display: flex; gap: 15px; margin-left: auto; padding: 2px 8px 0 0; color: #0c1826; }

.tabs { display: flex; align-items: flex-end; height: 29px; padding-left: 9px; border-bottom: 1px solid #567a9b; background: #dbe9f2; flex: none; color: #14202c; }
.tabs button { height: 25px; padding: 0 12px; margin-bottom: -1px; }
.tabs .active { padding: 0 8px; margin-right: 3px; border: 1px solid #567a9b; border-bottom: 0; border-radius: 5px 5px 0 0; background: linear-gradient(#e3eef6, #fff); }

.ribbon { display: flex; align-items: flex-start; gap: 4px; height: 100px; padding: 3px 5px; border-bottom: 1px solid #5b7d9a; background: linear-gradient(#fff 35%, #f0f2f3 60%, #d9dfe1) 0 0 / 100% 96px no-repeat, #fff; font-size: 11px; flex: none; }
.group { position: relative; display: flex; flex-direction: column; height: 93px; border: 1px solid #b3c3cd; border-bottom: 0; border-color: #b3c3cd #d3dbdf transparent; border-radius: 3px 3px 0 0; background: linear-gradient(#fff 35%, #f0f2f3 60%, #d9dfe1); }
.tools { display: flex; height: 75px; }
.group h2 { font-size: 9px; font-weight: normal; line-height: 17px; text-align: center; color: #3f484e; }
.group h2:not(:last-child) { padding-right: 14px; }
.group .expand { position: absolute; right: 3px; bottom: 0; height: 17px; }
.g1 { width: 183px; } .g2 { width: 288px; } .g3 { width: 180px; } .g4 { width: 76px; }
.large { width: 48px; padding-top: 7px; display: flex; flex-direction: column; align-items: center; justify-content: flex-start; gap: 4px; line-height: 14px; }
.large svg { width: 33px; height: 30px; color: #555; flex: none; }
.stack { display: flex; flex-direction: column; }
.stack button { display: flex; align-items: center; gap: 5px; height: 25px; padding-left: 4px; white-space: nowrap; }
.stack svg { color: #4a4f53; }
.group button:disabled { color: #a3a8ab; }
.group button:disabled svg { color: #a3a8ab; }
.g2 .large { width: 62px; padding: 14px 0 0 10px; }
.g2 .large svg { margin-right: 8px; }
.g2 .stack { width: 86px; }
.g3 .large { width: 50px; }

.message { display: flex; align-items: center; height: 31px; padding: 0 5px 0 6px; background: repeating-linear-gradient(135deg, #d3e2ed 0 2px, #cddfeb 2px 4px); flex: none; }
.message p { font-size: 11px; margin: 0 auto 5px 6px; color: #39444d; }
.dot { width: 5px; height: 5px; border-radius: 50%; background: #1a1ad0; margin-bottom: 5px; }
.bar { width: 1px; height: 25px; margin-right: 9px; background: #9fb5c4; box-shadow: 1px 0 #fff; }
.message label { width: 93px; margin-left: -2px; color: #39444d; }
.combo { appearance: none; width: 153px; height: 23px; padding: 0 5px; font: inherit; color: #39444d; border: 1px solid #7396b0; border-radius: 2px; background-color: #fff; background-image: linear-gradient(to bottom left, #2a3640 50%, transparent 52%), linear-gradient(to bottom right, #2a3640 50%, transparent 52%); background-size: 3px 4px; background-position: right 7px top 9px, right 4px top 9px; background-repeat: no-repeat; }

.work { flex: 1; min-height: 0; display: flex; background: repeating-linear-gradient(135deg, #d6e5ef 0 2px, #cddfea 2px 4px); }
.side { width: 256px; display: flex; flex-direction: column; flex: none; }
.side-tabs { position: relative; display: flex; gap: 24px; height: 29px; padding: 4px 0 0 19px; border-bottom: 1px solid #a8b8c2; margin-right: 10px; flex: none; color: #444; }
.side-shape { position: absolute; left: 7px; bottom: -1px; }
.side-tabs button { position: relative; display: grid; place-items: center; width: 18px; }
.side-row { flex: 1; min-height: 0; display: flex; background: linear-gradient(100deg, #fff 0, rgba(255,255,255,.85) 30%, rgba(255,255,255,0) 92%); }
.panels { width: 246px; padding: 0 6px 6px 7px; display: flex; flex-direction: column; border-right: 1px solid #bccbd5; }
.phead { display: flex; align-items: center; height: 30px; padding: 0 1px 2px 0; flex: none; }
.panels .treebox + .phead { height: 36px; padding-top: 4px; }
.phead h2 { font-size: 12px; margin-right: auto; color: #111a22; }
.drop.big { padding-top: 3px; width: 14px; }
.drop.big::after { border-width: 4px 4px 0; }
.pick { display: flex; align-items: center; gap: 4px; width: 39px; padding-left: 7px; }
.pick i { border-width: 4px 4px 0; }
.treebox { flex: 1 1 0; min-height: 0; overflow: hidden; border: 1px solid #7396b0; border-radius: 3px; background: #fff; font: 12px/18px "Open Sans", "Noto Sans", sans-serif; color: #39444d; }
.treebox .root { display: flex; align-items: center; gap: 7px; padding-left: 4px; height: 18px; }
.treebox ul { margin-left: 12px; }
.treebox li { position: relative; display: flex; align-items: center; height: 18px; padding-left: 12px; gap: 4px; }
.treebox li.sub { gap: 6px; }
.treebox li::before { content: ""; position: absolute; left: 0; top: 0; width: 11px; height: 9px; border: dotted #9aa4ab; border-width: 0 0 1px 1px; }
.treebox li:not(:last-child)::after { content: ""; position: absolute; left: 0; top: 9px; height: 9px; border-left: 1px dotted #9aa4ab; }
.treebox li svg { color: #555; }
.treebox li span { padding: 0 1px; line-height: 17px; }
.treebox.model .root { padding-left: 5px; }
.treebox.model li { gap: 2px; }
.sel { background: #ade6e6; color: #101820; }
.sash { flex: 1; display: flex; flex-direction: column; justify-content: center; gap: 9px; padding: 0 0 28px 2px; }
.sash span { height: 93px; border: 1px solid #c0ced8; border-right: 0; border-radius: 4px 0 0 4px; display: grid; place-items: center; }
.sash .firm { border-color: #93a5b2; background: #c8d9e4; }
.sash span::after { content: ""; width: 3px; height: 3px; border: 1px solid #333; border-radius: 50%; }

.stage { flex: 1; min-width: 0; display: flex; flex-direction: column; }
.canvas { position: relative; flex: 1; min-height: 0; border-radius: 3px 0 0 3px; background: #7c9abf; }
.drawing { position: absolute; inset: 0; width: 100%; height: 100%; }
.datum { font: 7px "Liberation Mono", monospace; fill: #8d5c38; }
.info { position: absolute; left: 12px; bottom: 0; display: flex; gap: 16px; font: 9px/14px Lato, sans-serif; color: #dcdcb8; white-space: pre; }
.context { position: absolute; left: 461px; top: 167px; width: 180px; padding: 2px 0; border: 1px solid #5d6468; border-radius: 3px; background: #fff; box-shadow: 4px 4px 2px rgba(30, 45, 65, .6); color: #39444d; }
.context button { display: flex; align-items: center; width: 100%; height: 22px; padding-left: 27px; white-space: pre; }
.context svg { margin: 0 6px 0 -18px; }

.sheets { display: flex; align-items: center; height: 24px; flex: none; }
.sheets > button { width: 19px; height: 22px; display: grid; place-items: center; }
.sheet-tabs { position: relative; display: flex; align-items: center; height: 24px; margin-left: 25px; }
.sheet-shape { position: absolute; left: 0; top: 0; }
.sheet-tabs button { position: relative; }
.sheet { padding-left: 10px; font-weight: bold; color: #10181f; }
.add { margin-left: 13px; height: 18px; }

/* taskbar */
.taskbar { position: relative; display: flex; align-items: stretch; height: 40px; border-top: 1px solid #8c9fb3; background: linear-gradient(rgba(255,255,255,.14), rgba(255,255,255,0) 50%), linear-gradient(95deg, #1f3350 0, #23375a 16%, #2b4069 22%, #3a5684 30%, #2a4470 38%, #34527f 48%, #25406b 54%, #4b6c98 65%, #2c4a78 75%, #4a6d96 83%, #6d92b8 88%, #41607f 92%, #47637f 100%); }
.task { display: grid; place-items: center; flex: none; }
.start { width: 54px; }
.ie { width: 68px; }
.wmp { width: 66px; }
.open { width: 58px; border: 1px solid #a3adb9; border-radius: 3px; background: linear-gradient(135deg, #8b95a3, #47536a 50%, #5f6b80); }
.open.active { width: 54px; border-color: #e6eaee; background: linear-gradient(135deg, #d5d9de, #8d96a4 50%, #aab1bd); box-shadow: 3px 0 0 -1px #6b778a, 5px 0 0 -1px #c2c9d2; }
.tray { display: flex; align-items: center; gap: 8px; margin-left: auto; color: #fff; }
.tray > svg:first-child { margin-right: 4px; }
.tray time { width: 70px; margin-left: -1px; text-align: center; font: 12px/17px "Open Sans", "Noto Sans", sans-serif; }
.peek { align-self: stretch; width: 15px; margin-left: -7px; border: 1px solid #9fb1c2; background: linear-gradient(135deg, #9fb4c8, #4d6886 50%, #7b92aa); }
```
